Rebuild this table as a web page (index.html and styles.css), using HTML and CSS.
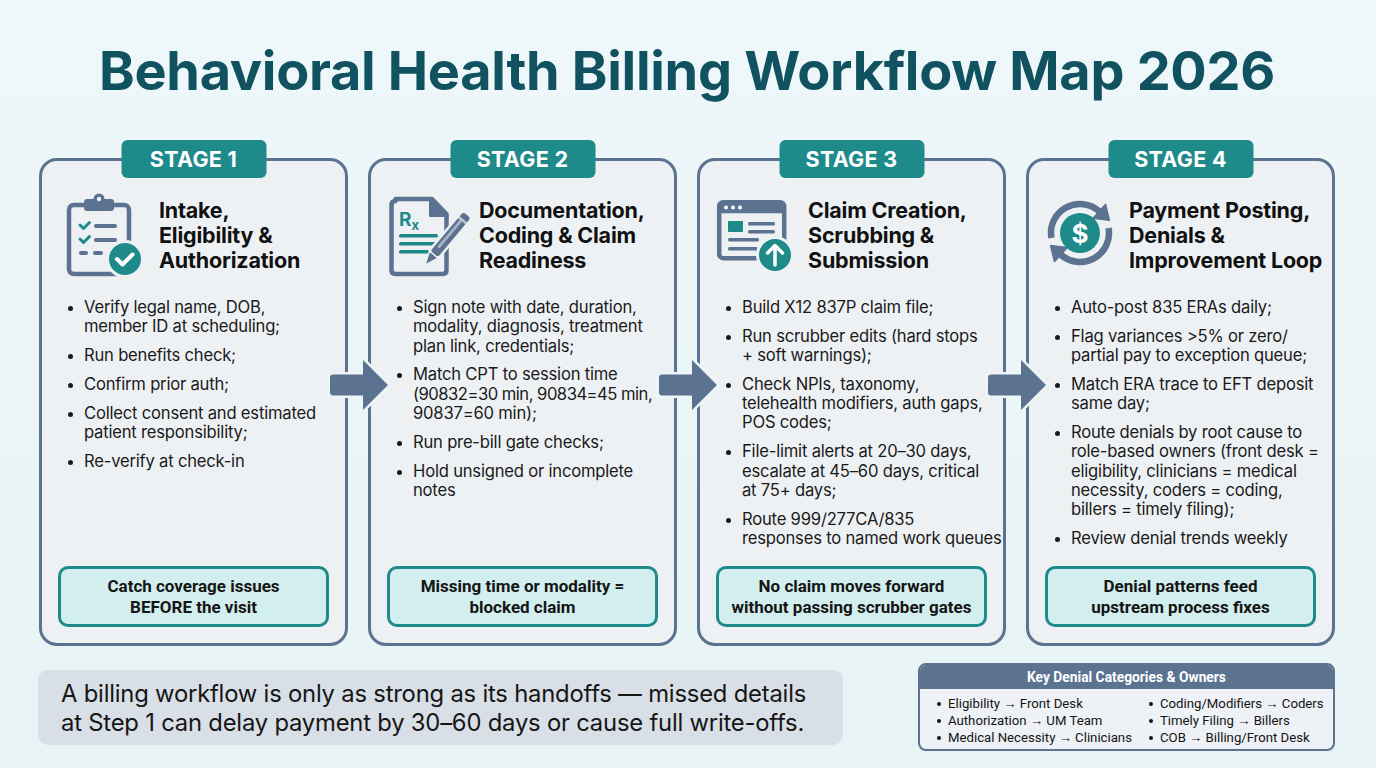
FILE: index.html
```html
<!DOCTYPE html>
<html lang="en">
<head>
<meta charset="utf-8">
<title>Behavioral Health Billing Workflow Map 2026</title>
<link rel="stylesheet" href="styles.css">
</head>
<body>
<div class="page">
  <h1 class="title">Behavioral Health Billing Workflow Map 2026</h1>

  <div class="stages">
    <section class="card">
      <div class="badge">STAGE 1</div>
      <div class="card-head head-1">
        <svg class="icon" viewBox="0 0 80 84" width="80" height="84">
          <rect x="3" y="12" width="60" height="69" rx="5" fill="none" stroke="#5b7291" stroke-width="4.5"/>
          <rect x="18" y="6" width="30" height="12" rx="3" fill="#5b7291"/>
          <circle cx="33" cy="6" r="5.5" fill="#5b7291"/>
          <circle cx="33" cy="6" r="2.2" fill="#eef1f4"/>
          <path d="M14 32 l3.5 3.5 l6 -6" fill="none" stroke="#1e8a8a" stroke-width="3" stroke-linecap="round" stroke-linejoin="round"/>
          <path d="M14 46 l3.5 3.5 l6 -6" fill="none" stroke="#1e8a8a" stroke-width="3" stroke-linecap="round" stroke-linejoin="round"/>
          <rect x="28" y="31" width="23" height="4" rx="2" fill="#5b7291"/>
          <rect x="28" y="45" width="23" height="4" rx="2" fill="#5b7291"/>
          <rect x="13" y="58" width="9" height="4" rx="2" fill="#5b7291"/>
          <rect x="27" y="58" width="10" height="4" rx="2" fill="#5b7291"/>
          <circle cx="59" cy="66" r="17.5" fill="#1e8a8a" stroke="#eef1f4" stroke-width="3"/>
          <path d="M51 66 l5.5 5.5 l10 -10" fill="none" stroke="#fff" stroke-width="4" stroke-linecap="round" stroke-linejoin="round"/>
        </svg>
        <h2 class="card-title">Intake,<br>Eligibility &amp;<br>Authorization</h2>
      </div>
      <ul class="steps">
        <li>Verify legal name, DOB,<br>member ID at scheduling;</li>
        <li>Run benefits check;</li>
        <li>Confirm prior auth;</li>
        <li>Collect consent and estimated<br>patient responsibility;</li>
        <li>Re-verify at check-in</li>
      </ul>
      <div class="callout">Catch coverage issues<br>BEFORE the visit</div>
      <svg class="arrow" viewBox="0 0 64 58" width="64" height="58">
        <path d="M6 18.5 H36 V4 L61 29 L36 54 V39.5 H6 Q3 39.5 3 36.5 V21.5 Q3 18.5 6 18.5 Z" fill="#5b7291" stroke="#edf5f7" stroke-width="5" stroke-linejoin="round" paint-order="stroke"/>
      </svg>
    </section>

    <section class="card">
      <div class="badge">STAGE 2</div>
      <div class="card-head head-2">
        <svg class="icon" viewBox="0 0 80 84" width="80" height="84">
          <path d="M6.5 8 Q2.5 8 2.5 12 V77 Q2.5 81 6.5 81 H53.5 Q57.5 81 57.5 77 V21 L43 6 H6.5 Z" fill="none" stroke="#5b7291" stroke-width="4.5" stroke-linejoin="round"/>
          <path d="M41 6 V23 H57.5 Z" fill="#5b7291" stroke="#5b7291" stroke-width="2" stroke-linejoin="round"/>
          <text x="10" y="33" font-family="Inter, sans-serif" font-weight="700" font-size="19" fill="#1e8a8a">R<tspan dy="4" font-size="13">x</tspan></text>
          <rect x="10" y="41" width="39" height="3.5" rx="1.5" fill="#1e8a8a"/>
          <rect x="10" y="49" width="39" height="3.5" rx="1.5" fill="#1e8a8a"/>
          <rect x="10" y="57" width="30" height="3.5" rx="1.5" fill="#1e8a8a"/>
          <g transform="rotate(40 57 47)">
            <rect x="51" y="13" width="12" height="54" rx="4.5" fill="#5b7291" stroke="#eef1f4" stroke-width="2.5"/>
            <path d="M51.5 66 L57 80 L62.5 66 Z" fill="#5b7291" stroke="#eef1f4" stroke-width="1.5" stroke-linejoin="round"/>
            <rect x="54.5" y="22" width="3" height="36" rx="1.5" fill="#eef1f4" opacity="0.5"/>
            <rect x="51" y="20" width="12" height="2.5" fill="#eef1f4" opacity="0.7"/>
          </g>
        </svg>
        <h2 class="card-title">Documentation,<br>Coding &amp; Claim<br>Readiness</h2>
      </div>
      <ul class="steps">
        <li>Sign note with date, duration,<br>modality, diagnosis, treatment<br>plan link, credentials;</li>
        <li>Match CPT to session time<br><span class="tight">(90832=30 min, 90834=45 min,</span><br>90837=60 min);</li>
        <li>Run pre-bill gate checks;</li>
        <li>Hold unsigned or incomplete<br>notes</li>
      </ul>
      <div class="callout">Missing time or modality =<br>blocked claim</div>
      <svg class="arrow" viewBox="0 0 64 58" width="64" height="58">
        <path d="M6 18.5 H36 V4 L61 29 L36 54 V39.5 H6 Q3 39.5 3 36.5 V21.5 Q3 18.5 6 18.5 Z" fill="#5b7291" stroke="#edf5f7" stroke-width="5" stroke-linejoin="round" paint-order="stroke"/>
      </svg>
    </section>

    <section class="card">
      <div class="badge">STAGE 3</div>
      <div class="card-head head-3">
        <svg class="icon" viewBox="0 0 80 84" width="80" height="84">
          <rect x="2.2" y="9.2" width="65" height="56" rx="4" fill="none" stroke="#5b7291" stroke-width="4.5"/>
          <rect x="2.2" y="9.2" width="65" height="11" rx="2" fill="#5b7291"/>
          <circle cx="9" cy="14.5" r="2" fill="#fff"/>
          <circle cx="16" cy="14.5" r="2" fill="#fff"/>
          <circle cx="23" cy="14.5" r="2" fill="#fff"/>
          <rect x="11" y="28" width="15" height="11" rx="1" fill="#1e8a8a"/>
          <rect x="31" y="29" width="27" height="3.5" rx="1.5" fill="#5b7291"/>
          <rect x="31" y="37" width="27" height="3.5" rx="1.5" fill="#5b7291"/>
          <rect x="11" y="45" width="31" height="3.5" rx="1.5" fill="#5b7291"/>
          <rect x="11" y="54" width="30" height="3.5" rx="1.5" fill="#5b7291"/>
          <circle cx="58" cy="62" r="17.5" fill="#1e8a8a" stroke="#eef1f4" stroke-width="3"/>
          <path d="M58 72 V53 M50.5 60 L58 52.5 L65.5 60" fill="none" stroke="#fff" stroke-width="3.5" stroke-linecap="round" stroke-linejoin="round"/>
        </svg>
        <h2 class="card-title">Claim Creation,<br>Scrubbing &amp;<br>Submission</h2>
      </div>
      <ul class="steps">
        <li>Build X12 837P claim file;</li>
        <li>Run scrubber edits (hard stops<br>+ soft warnings);</li>
        <li>Check NPIs, taxonomy,<br>telehealth modifiers, auth gaps,<br>POS codes;</li>
        <li>File-limit alerts at 20–30 days,<br>escalate at 45–60 days, critical<br>at 75+ days;</li>
        <li>Route 999/277CA/835<br>responses to named work queues</li>
      </ul>
      <div class="callout">No claim moves forward<br>without passing scrubber gates</div>
      <svg class="arrow" viewBox="0 0 64 58" width="64" height="58">
        <path d="M6 18.5 H36 V4 L61 29 L36 54 V39.5 H6 Q3 39.5 3 36.5 V21.5 Q3 18.5 6 18.5 Z" fill="#5b7291" stroke="#edf5f7" stroke-width="5" stroke-linejoin="round" paint-order="stroke"/>
      </svg>
    </section>

    <section class="card">
      <div class="badge">STAGE 4</div>
      <div class="card-head head-4">
        <svg class="icon" viewBox="0 0 72 84" width="72" height="84">
          <path d="M6.4 45 A29 29 0 0 1 54.4 18.45" fill="none" stroke="#5b7291" stroke-width="6.5"/>
          <path d="M60.4 11.8 L48.4 25.1 L64.1 27.1 Z" fill="#5b7291" stroke="#5b7291" stroke-width="2" stroke-linejoin="round"/>
          <path d="M63.6 35 A29 29 0 0 1 15.6 61.5" fill="none" stroke="#5b7291" stroke-width="6.5"/>
          <path d="M9.6 68.2 L21.6 54.8 L5.9 52.8 Z" fill="#5b7291" stroke="#5b7291" stroke-width="2" stroke-linejoin="round"/>
          <circle cx="35" cy="40" r="20" fill="#1e8a8a"/>
          <text x="35" y="49.5" text-anchor="middle" font-family="Inter, sans-serif" font-weight="700" font-size="26" fill="#fff">$</text>
        </svg>
        <h2 class="card-title">Payment Posting,<br>Denials &amp;<br>Improvement Loop</h2>
      </div>
      <ul class="steps">
        <li>Auto-post 835 ERAs daily;</li>
        <li>Flag variances &gt;5% or zero/<br>partial pay to exception queue;</li>
        <li>Match ERA trace to EFT deposit<br>same day;</li>
        <li>Route denials by root cause to<br>role-based owners (front desk =<br>eligibility, clinicians = medical<br>necessity, coders = coding,<br>billers = timely filing);</li>
        <li>Review denial trends weekly</li>
      </ul>
      <div class="callout">Denial patterns feed<br>upstream process fixes</div>
    </section>
  </div>

  <div class="bottom">
    <p class="note">A billing workflow is only as strong as its handoffs — missed details<br>at Step 1 can delay payment by 30–60 days or cause full write-offs.</p>
    <div class="key">
      <div class="key-head">Key Denial Categories &amp; Owners</div>
      <div class="key-body">
        <ul class="key-list">
          <li>Eligibility → Front Desk</li>
          <li>Authorization → UM Team</li>
          <li>Medical Necessity → Clinicians</li>
        </ul>
        <ul class="key-list">
          <li>Coding/Modifiers → Coders</li>
          <li>Timely Filing → Billers</li>
          <li>COB → Billing/Front Desk</li>
        </ul>
      </div>
    </div>
  </div>
</div>
</body>
</html>
```

FILE: styles.css
```css
* { box-sizing: border-box; }
html, body { margin: 0; padding: 0; }
body {
  width: 1376px;
  height: 768px;
  overflow: hidden;
  background: linear-gradient(180deg, #eef7f9 0%, #e7f3f5 100%);
  font-family: Inter, "Noto Sans", sans-serif;
  color: #161616;
}
.page {
  padding: 39px 41px 0 39px;
}
.title {
  margin: 0;
  text-align: center;
  font-family: Inter, sans-serif;
  font-weight: 700;
  font-size: 54px;
  line-height: 64px;
  letter-spacing: -0.3px;
  color: #10525f;
}
.stages {
  display: grid;
  grid-template-columns: repeat(4, 309px);
  column-gap: 20px;
  margin-top: 55px;
}
.card {
  position: relative;
  height: 488px;
  border: 3px solid #5b7291;
  border-radius: 18px;
  background: #eef1f4;
  padding: 32px 16px 16px 16px;
  display: flex;
  flex-direction: column;
}
.badge {
  position: absolute;
  top: -21px;
  left: 50%;
  transform: translateX(-50%);
  width: 145px;
  height: 38px;
  border-radius: 6px;
  background: #1e8a8a;
  color: #fff;
  font-family: Inter, sans-serif;
  font-weight: 700;
  font-size: 21.5px;
  line-height: 38px;
  letter-spacing: 0.3px;
  text-align: center;
}
.card-head {
  display: flex;
  align-items: center;
}
.head-1 { padding-left: 8px; gap: 13px; }
.head-2 { padding-left: 2px; gap: 10px; }
.head-3 { padding-left: 1px; gap: 11px; }
.head-4 { padding-left: 0; gap: 12px; }
.icon { flex: none; display: block; overflow: visible; }
.card-title {
  margin: 0;
  font-family: Inter, sans-serif;
  font-weight: 700;
  font-size: 21.5px;
  line-height: 25px;
  color: #111;
  letter-spacing: -0.2px;
  white-space: nowrap;
}
.steps {
  list-style: none;
  margin: 21px 0 0 0;
  padding: 0 0 0 26px;
  font-size: 16.6px;
  line-height: 19.3px;
  color: #1a1a1a;
  letter-spacing: -0.2px;
}
.steps li {
  position: relative;
  margin-bottom: 9.5px;
  white-space: nowrap;
}
.steps li::before {
  content: "";
  position: absolute;
  left: -16px;
  top: 8px;
  width: 5px;
  height: 5px;
  border-radius: 50%;
  background: #1a1a1a;
}
.tight { letter-spacing: -0.5px; }
.callout {
  margin-top: auto;
  flex: none;
  height: 61px;
  border: 3px solid #1e8a8a;
  border-radius: 10px;
  background: #d3eeee;
  font-family: Roboto, sans-serif;
  font-weight: 700;
  font-size: 17px;
  line-height: 21px;
  text-align: center;
  color: #151515;
  padding-top: 7px;
}
.arrow {
  position: absolute;
  left: 285px;
  top: 195px;
  z-index: 2;
}
.bottom {
  display: flex;
  justify-content: space-between;
  align-items: center;
  margin-top: 17px;
}
.note {
  margin: 0 0 0 -1px;
  width: 805px;
  height: 75px;
  background: #d9dfe6;
  border-radius: 10px;
  padding: 9px 0 0 23px;
  font-size: 23.8px;
  line-height: 29px;
  color: #161616;
  letter-spacing: -0.2px;
  white-space: nowrap;
}
.key {
  width: 417px;
  height: 88px;
  border: 2px solid #5b7291;
  border-radius: 8px;
  background: #eef1f5;
  overflow: hidden;
}
.key-head {
  height: 24px;
  background: #5b7291;
  color: #fff;
  font-family: Roboto, sans-serif;
  font-weight: 700;
  font-size: 13.8px;
  line-height: 24px;
  text-align: center;
}
.key-body {
  display: flex;
  padding: 6px 0 0 14px;
  gap: 14px;
}
.key-list {
  list-style: none;
  margin: 0;
  padding: 0 0 0 14px;
  font-family: Roboto, sans-serif;
  font-size: 13.2px;
  line-height: 17px;
  color: #141414;
}
.key-list li { position: relative; white-space: nowrap; }
.key-list li::before {
  content: "";
  position: absolute;
  left: -11px;
  top: 7px;
  width: 4px;
  height: 4px;
  border-radius: 50%;
  background: #141414;
}
```
